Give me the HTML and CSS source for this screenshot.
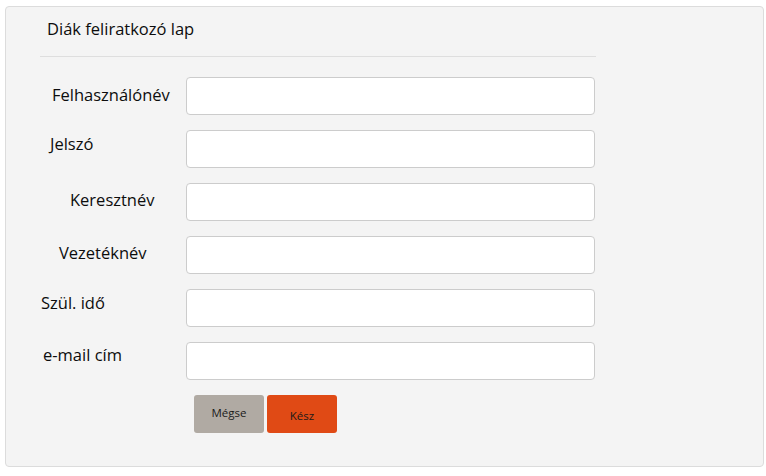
FILE: index.html
```html
<!DOCTYPE html>
<html lang="hu">
<head>
<meta charset="utf-8">
<title>Diák feliratkozó lap</title>
<link rel="stylesheet" href="styles.css">
</head>
<body>
<div class="panel">
  <h1 class="title">Diák feliratkozó lap</h1>
  <hr class="rule">
  <form class="form">
    <div class="row">
      <label class="label lab-user">Felhasználónév</label>
      <input class="field" type="text">
    </div>
    <div class="row">
      <label class="label lab-pass">Jelszó</label>
      <input class="field" type="password">
    </div>
    <div class="row">
      <label class="label lab-first">Keresztnév</label>
      <input class="field" type="text">
    </div>
    <div class="row">
      <label class="label lab-last">Vezetéknév</label>
      <input class="field" type="text">
    </div>
    <div class="row">
      <label class="label lab-birth">Szül. idő</label>
      <input class="field" type="text">
    </div>
    <div class="row">
      <label class="label lab-mail">e-mail cím</label>
      <input class="field" type="text">
    </div>
    <div class="actions">
      <button type="button" class="btn btn-cancel">Mégse</button>
      <button type="button" class="btn btn-done">Kész</button>
    </div>
  </form>
</div>
</body>
</html>
```

FILE: styles.css
```css
* { box-sizing: border-box; }
html, body { margin: 0; padding: 0; background: #ffffff; }
body {
  font-family: "Open Sans", "Noto Sans", sans-serif;
  color: #0d0d0d;
  padding: 6px 2px 0 5px;
}
.panel {
  width: 759px;
  height: 461px;
  background: #f4f4f4;
  border: 1px solid #dcdcdc;
  border-radius: 4px;
  padding-top: 11px;
}
.title {
  margin: 0 0 0 41px;
  font-size: 16.5px;
  font-weight: normal;
  line-height: 22px;
  height: 22px;
}
.rule {
  margin: 16px 0 0 34px;
  width: 556px;
  border: 0;
  border-top: 1px solid #dedede;
  height: 0;
}
.form {
  display: flex;
  flex-direction: column;
  gap: 15px;
  margin-top: 20px;
}
.row {
  display: flex;
  align-items: center;
  height: 38px;
}
.label {
  width: 180px;
  font-size: 16.5px;
  line-height: 20px;
}
.lab-user { padding-left: 46px; padding-bottom: 2px; }
.lab-pass { padding-left: 44px; padding-bottom: 10px; }
.lab-first { padding-left: 64px; padding-bottom: 5px; }
.lab-last { padding-left: 53px; padding-bottom: 5px; }
.lab-birth { padding-left: 35px; padding-bottom: 10px; }
.lab-mail { padding-left: 37px; padding-bottom: 12px; }
.field {
  width: 409px;
  height: 38px;
  border: 1px solid #cccccc;
  border-radius: 4px;
  background: #ffffff;
  margin: 0;
  padding: 0 8px;
}
.actions {
  display: flex;
  gap: 3px;
  padding-left: 188px;
}
.btn {
  width: 70px;
  height: 38px;
  border: 0;
  border-radius: 3px;
  font-family: "Open Sans", "Noto Sans", sans-serif;
  font-size: 11.5px;
  color: #1a1a1a;
  margin: 0;
  padding: 0;
}
.btn-cancel { background: #b0aaa3; padding-bottom: 4px; }
.btn-done { background: #e04a15; padding-top: 3px; }
```
